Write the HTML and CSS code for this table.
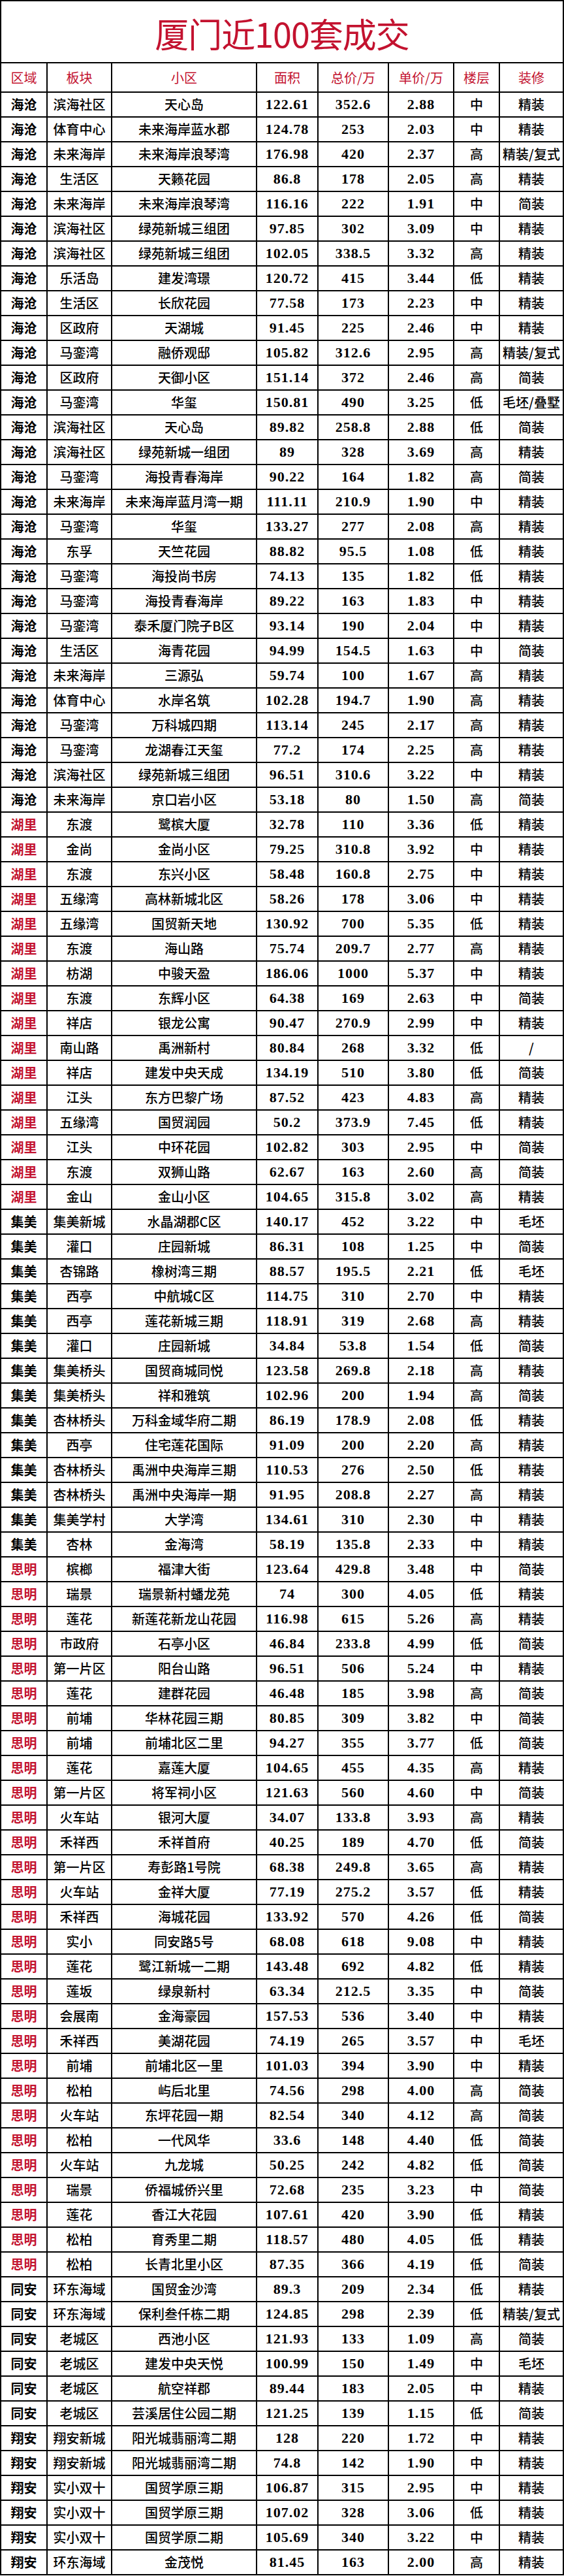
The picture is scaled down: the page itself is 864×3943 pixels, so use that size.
FILE: index.html
```html
<!DOCTYPE html>
<html lang="zh-CN">
<head>
<meta charset="utf-8">
<title>厦门近100套成交</title>
<link rel="stylesheet" href="styles.css">
</head>
<body>
<div class="sheet">
  <div class="title">厦门近100套成交</div>
  <div class="row head"><span>区域</span><span>板块</span><span>小区</span><span>面积</span><span>总价/万</span><span>单价/万</span><span>楼层</span><span>装修</span></div>
  <div class="row"><span>海沧</span><span>滨海社区</span><span>天心岛</span><span>122.61</span><span>352.6</span><span>2.88</span><span>中</span><span>精装</span></div>
  <div class="row"><span>海沧</span><span>体育中心</span><span>未来海岸蓝水郡</span><span>124.78</span><span>253</span><span>2.03</span><span>中</span><span>精装</span></div>
  <div class="row"><span>海沧</span><span>未来海岸</span><span>未来海岸浪琴湾</span><span>176.98</span><span>420</span><span>2.37</span><span>高</span><span>精装/复式</span></div>
  <div class="row"><span>海沧</span><span>生活区</span><span>天籁花园</span><span>86.8</span><span>178</span><span>2.05</span><span>高</span><span>精装</span></div>
  <div class="row"><span>海沧</span><span>未来海岸</span><span>未来海岸浪琴湾</span><span>116.16</span><span>222</span><span>1.91</span><span>中</span><span>简装</span></div>
  <div class="row"><span>海沧</span><span>滨海社区</span><span>绿苑新城三组团</span><span>97.85</span><span>302</span><span>3.09</span><span>中</span><span>精装</span></div>
  <div class="row"><span>海沧</span><span>滨海社区</span><span>绿苑新城三组团</span><span>102.05</span><span>338.5</span><span>3.32</span><span>高</span><span>精装</span></div>
  <div class="row"><span>海沧</span><span>乐活岛</span><span>建发湾璟</span><span>120.72</span><span>415</span><span>3.44</span><span>低</span><span>精装</span></div>
  <div class="row"><span>海沧</span><span>生活区</span><span>长欣花园</span><span>77.58</span><span>173</span><span>2.23</span><span>中</span><span>精装</span></div>
  <div class="row"><span>海沧</span><span>区政府</span><span>天湖城</span><span>91.45</span><span>225</span><span>2.46</span><span>中</span><span>精装</span></div>
  <div class="row"><span>海沧</span><span>马銮湾</span><span>融侨观邸</span><span>105.82</span><span>312.6</span><span>2.95</span><span>高</span><span>精装/复式</span></div>
  <div class="row"><span>海沧</span><span>区政府</span><span>天御小区</span><span>151.14</span><span>372</span><span>2.46</span><span>高</span><span>简装</span></div>
  <div class="row"><span>海沧</span><span>马銮湾</span><span>华玺</span><span>150.81</span><span>490</span><span>3.25</span><span>低</span><span>毛坯/叠墅</span></div>
  <div class="row"><span>海沧</span><span>滨海社区</span><span>天心岛</span><span>89.82</span><span>258.8</span><span>2.88</span><span>低</span><span>简装</span></div>
  <div class="row"><span>海沧</span><span>滨海社区</span><span>绿苑新城一组团</span><span>89</span><span>328</span><span>3.69</span><span>高</span><span>精装</span></div>
  <div class="row"><span>海沧</span><span>马銮湾</span><span>海投青春海岸</span><span>90.22</span><span>164</span><span>1.82</span><span>高</span><span>简装</span></div>
  <div class="row"><span>海沧</span><span>未来海岸</span><span>未来海岸蓝月湾一期</span><span>111.11</span><span>210.9</span><span>1.90</span><span>中</span><span>精装</span></div>
  <div class="row"><span>海沧</span><span>马銮湾</span><span>华玺</span><span>133.27</span><span>277</span><span>2.08</span><span>高</span><span>精装</span></div>
  <div class="row"><span>海沧</span><span>东孚</span><span>天竺花园</span><span>88.82</span><span>95.5</span><span>1.08</span><span>低</span><span>精装</span></div>
  <div class="row"><span>海沧</span><span>马銮湾</span><span>海投尚书房</span><span>74.13</span><span>135</span><span>1.82</span><span>低</span><span>精装</span></div>
  <div class="row"><span>海沧</span><span>马銮湾</span><span>海投青春海岸</span><span>89.22</span><span>163</span><span>1.83</span><span>中</span><span>精装</span></div>
  <div class="row"><span>海沧</span><span>马銮湾</span><span>泰禾厦门院子B区</span><span>93.14</span><span>190</span><span>2.04</span><span>中</span><span>精装</span></div>
  <div class="row"><span>海沧</span><span>生活区</span><span>海青花园</span><span>94.99</span><span>154.5</span><span>1.63</span><span>中</span><span>简装</span></div>
  <div class="row"><span>海沧</span><span>未来海岸</span><span>三源弘</span><span>59.74</span><span>100</span><span>1.67</span><span>高</span><span>精装</span></div>
  <div class="row"><span>海沧</span><span>体育中心</span><span>水岸名筑</span><span>102.28</span><span>194.7</span><span>1.90</span><span>高</span><span>精装</span></div>
  <div class="row"><span>海沧</span><span>马銮湾</span><span>万科城四期</span><span>113.14</span><span>245</span><span>2.17</span><span>高</span><span>精装</span></div>
  <div class="row"><span>海沧</span><span>马銮湾</span><span>龙湖春江天玺</span><span>77.2</span><span>174</span><span>2.25</span><span>高</span><span>精装</span></div>
  <div class="row"><span>海沧</span><span>滨海社区</span><span>绿苑新城三组团</span><span>96.51</span><span>310.6</span><span>3.22</span><span>中</span><span>精装</span></div>
  <div class="row"><span>海沧</span><span>未来海岸</span><span>京口岩小区</span><span>53.18</span><span>80</span><span>1.50</span><span>高</span><span>简装</span></div>
  <div class="row hl"><span>湖里</span><span>东渡</span><span>鹭槟大厦</span><span>32.78</span><span>110</span><span>3.36</span><span>低</span><span>精装</span></div>
  <div class="row hl"><span>湖里</span><span>金尚</span><span>金尚小区</span><span>79.25</span><span>310.8</span><span>3.92</span><span>中</span><span>精装</span></div>
  <div class="row hl"><span>湖里</span><span>东渡</span><span>东兴小区</span><span>58.48</span><span>160.8</span><span>2.75</span><span>中</span><span>精装</span></div>
  <div class="row hl"><span>湖里</span><span>五缘湾</span><span>高林新城北区</span><span>58.26</span><span>178</span><span>3.06</span><span>中</span><span>精装</span></div>
  <div class="row hl"><span>湖里</span><span>五缘湾</span><span>国贸新天地</span><span>130.92</span><span>700</span><span>5.35</span><span>低</span><span>精装</span></div>
  <div class="row hl"><span>湖里</span><span>东渡</span><span>海山路</span><span>75.74</span><span>209.7</span><span>2.77</span><span>高</span><span>精装</span></div>
  <div class="row hl"><span>湖里</span><span>枋湖</span><span>中骏天盈</span><span>186.06</span><span>1000</span><span>5.37</span><span>中</span><span>精装</span></div>
  <div class="row hl"><span>湖里</span><span>东渡</span><span>东辉小区</span><span>64.38</span><span>169</span><span>2.63</span><span>中</span><span>简装</span></div>
  <div class="row hl"><span>湖里</span><span>祥店</span><span>银龙公寓</span><span>90.47</span><span>270.9</span><span>2.99</span><span>中</span><span>精装</span></div>
  <div class="row hl"><span>湖里</span><span>南山路</span><span>禹洲新村</span><span>80.84</span><span>268</span><span>3.32</span><span>低</span><span>/</span></div>
  <div class="row hl"><span>湖里</span><span>祥店</span><span>建发中央天成</span><span>134.19</span><span>510</span><span>3.80</span><span>低</span><span>简装</span></div>
  <div class="row hl"><span>湖里</span><span>江头</span><span>东方巴黎广场</span><span>87.52</span><span>423</span><span>4.83</span><span>高</span><span>精装</span></div>
  <div class="row hl"><span>湖里</span><span>五缘湾</span><span>国贸润园</span><span>50.2</span><span>373.9</span><span>7.45</span><span>低</span><span>精装</span></div>
  <div class="row hl"><span>湖里</span><span>江头</span><span>中环花园</span><span>102.82</span><span>303</span><span>2.95</span><span>中</span><span>简装</span></div>
  <div class="row hl"><span>湖里</span><span>东渡</span><span>双狮山路</span><span>62.67</span><span>163</span><span>2.60</span><span>高</span><span>简装</span></div>
  <div class="row hl"><span>湖里</span><span>金山</span><span>金山小区</span><span>104.65</span><span>315.8</span><span>3.02</span><span>高</span><span>精装</span></div>
  <div class="row"><span>集美</span><span>集美新城</span><span>水晶湖郡C区</span><span>140.17</span><span>452</span><span>3.22</span><span>中</span><span>毛坯</span></div>
  <div class="row"><span>集美</span><span>灌口</span><span>庄园新城</span><span>86.31</span><span>108</span><span>1.25</span><span>中</span><span>简装</span></div>
  <div class="row"><span>集美</span><span>杏锦路</span><span>橡树湾三期</span><span>88.57</span><span>195.5</span><span>2.21</span><span>低</span><span>毛坯</span></div>
  <div class="row"><span>集美</span><span>西亭</span><span>中航城C区</span><span>114.75</span><span>310</span><span>2.70</span><span>中</span><span>精装</span></div>
  <div class="row"><span>集美</span><span>西亭</span><span>莲花新城三期</span><span>118.91</span><span>319</span><span>2.68</span><span>高</span><span>精装</span></div>
  <div class="row"><span>集美</span><span>灌口</span><span>庄园新城</span><span>34.84</span><span>53.8</span><span>1.54</span><span>低</span><span>简装</span></div>
  <div class="row"><span>集美</span><span>集美桥头</span><span>国贸商城同悦</span><span>123.58</span><span>269.8</span><span>2.18</span><span>高</span><span>精装</span></div>
  <div class="row"><span>集美</span><span>集美桥头</span><span>祥和雅筑</span><span>102.96</span><span>200</span><span>1.94</span><span>高</span><span>简装</span></div>
  <div class="row"><span>集美</span><span>杏林桥头</span><span>万科金域华府二期</span><span>86.19</span><span>178.9</span><span>2.08</span><span>低</span><span>精装</span></div>
  <div class="row"><span>集美</span><span>西亭</span><span>住宅莲花国际</span><span>91.09</span><span>200</span><span>2.20</span><span>高</span><span>精装</span></div>
  <div class="row"><span>集美</span><span>杏林桥头</span><span>禹洲中央海岸三期</span><span>110.53</span><span>276</span><span>2.50</span><span>低</span><span>精装</span></div>
  <div class="row"><span>集美</span><span>杏林桥头</span><span>禹洲中央海岸一期</span><span>91.95</span><span>208.8</span><span>2.27</span><span>高</span><span>精装</span></div>
  <div class="row"><span>集美</span><span>集美学村</span><span>大学湾</span><span>134.61</span><span>310</span><span>2.30</span><span>中</span><span>精装</span></div>
  <div class="row"><span>集美</span><span>杏林</span><span>金海湾</span><span>58.19</span><span>135.8</span><span>2.33</span><span>中</span><span>精装</span></div>
  <div class="row hl"><span>思明</span><span>槟榔</span><span>福津大街</span><span>123.64</span><span>429.8</span><span>3.48</span><span>中</span><span>简装</span></div>
  <div class="row hl"><span>思明</span><span>瑞景</span><span>瑞景新村蟠龙苑</span><span>74</span><span>300</span><span>4.05</span><span>低</span><span>精装</span></div>
  <div class="row hl"><span>思明</span><span>莲花</span><span>新莲花新龙山花园</span><span>116.98</span><span>615</span><span>5.26</span><span>高</span><span>精装</span></div>
  <div class="row hl"><span>思明</span><span>市政府</span><span>石亭小区</span><span>46.84</span><span>233.8</span><span>4.99</span><span>低</span><span>简装</span></div>
  <div class="row hl"><span>思明</span><span>第一片区</span><span>阳台山路</span><span>96.51</span><span>506</span><span>5.24</span><span>中</span><span>精装</span></div>
  <div class="row hl"><span>思明</span><span>莲花</span><span>建群花园</span><span>46.48</span><span>185</span><span>3.98</span><span>高</span><span>简装</span></div>
  <div class="row hl"><span>思明</span><span>前埔</span><span>华林花园三期</span><span>80.85</span><span>309</span><span>3.82</span><span>中</span><span>简装</span></div>
  <div class="row hl"><span>思明</span><span>前埔</span><span>前埔北区二里</span><span>94.27</span><span>355</span><span>3.77</span><span>低</span><span>简装</span></div>
  <div class="row hl"><span>思明</span><span>莲花</span><span>嘉莲大厦</span><span>104.65</span><span>455</span><span>4.35</span><span>高</span><span>精装</span></div>
  <div class="row hl"><span>思明</span><span>第一片区</span><span>将军祠小区</span><span>121.63</span><span>560</span><span>4.60</span><span>中</span><span>简装</span></div>
  <div class="row hl"><span>思明</span><span>火车站</span><span>银河大厦</span><span>34.07</span><span>133.8</span><span>3.93</span><span>高</span><span>精装</span></div>
  <div class="row hl"><span>思明</span><span>禾祥西</span><span>禾祥首府</span><span>40.25</span><span>189</span><span>4.70</span><span>低</span><span>简装</span></div>
  <div class="row hl"><span>思明</span><span>第一片区</span><span>寿彭路1号院</span><span>68.38</span><span>249.8</span><span>3.65</span><span>高</span><span>精装</span></div>
  <div class="row hl"><span>思明</span><span>火车站</span><span>金祥大厦</span><span>77.19</span><span>275.2</span><span>3.57</span><span>低</span><span>精装</span></div>
  <div class="row hl"><span>思明</span><span>禾祥西</span><span>海城花园</span><span>133.92</span><span>570</span><span>4.26</span><span>低</span><span>简装</span></div>
  <div class="row hl"><span>思明</span><span>实小</span><span>同安路5号</span><span>68.08</span><span>618</span><span>9.08</span><span>中</span><span>精装</span></div>
  <div class="row hl"><span>思明</span><span>莲花</span><span>鹭江新城一二期</span><span>143.48</span><span>692</span><span>4.82</span><span>低</span><span>精装</span></div>
  <div class="row hl"><span>思明</span><span>莲坂</span><span>绿泉新村</span><span>63.34</span><span>212.5</span><span>3.35</span><span>中</span><span>简装</span></div>
  <div class="row hl"><span>思明</span><span>会展南</span><span>金海豪园</span><span>157.53</span><span>536</span><span>3.40</span><span>中</span><span>精装</span></div>
  <div class="row hl"><span>思明</span><span>禾祥西</span><span>美湖花园</span><span>74.19</span><span>265</span><span>3.57</span><span>中</span><span>毛坯</span></div>
  <div class="row hl"><span>思明</span><span>前埔</span><span>前埔北区一里</span><span>101.03</span><span>394</span><span>3.90</span><span>中</span><span>精装</span></div>
  <div class="row hl"><span>思明</span><span>松柏</span><span>屿后北里</span><span>74.56</span><span>298</span><span>4.00</span><span>高</span><span>简装</span></div>
  <div class="row hl"><span>思明</span><span>火车站</span><span>东坪花园一期</span><span>82.54</span><span>340</span><span>4.12</span><span>高</span><span>简装</span></div>
  <div class="row hl"><span>思明</span><span>松柏</span><span>一代风华</span><span>33.6</span><span>148</span><span>4.40</span><span>低</span><span>简装</span></div>
  <div class="row hl"><span>思明</span><span>火车站</span><span>九龙城</span><span>50.25</span><span>242</span><span>4.82</span><span>低</span><span>简装</span></div>
  <div class="row hl"><span>思明</span><span>瑞景</span><span>侨福城侨兴里</span><span>72.68</span><span>235</span><span>3.23</span><span>中</span><span>简装</span></div>
  <div class="row hl"><span>思明</span><span>莲花</span><span>香江大花园</span><span>107.61</span><span>420</span><span>3.90</span><span>低</span><span>精装</span></div>
  <div class="row hl"><span>思明</span><span>松柏</span><span>育秀里二期</span><span>118.57</span><span>480</span><span>4.05</span><span>低</span><span>精装</span></div>
  <div class="row hl"><span>思明</span><span>松柏</span><span>长青北里小区</span><span>87.35</span><span>366</span><span>4.19</span><span>低</span><span>简装</span></div>
  <div class="row"><span>同安</span><span>环东海域</span><span>国贸金沙湾</span><span>89.3</span><span>209</span><span>2.34</span><span>低</span><span>精装</span></div>
  <div class="row"><span>同安</span><span>环东海域</span><span>保利叁仟栋二期</span><span>124.85</span><span>298</span><span>2.39</span><span>低</span><span>精装/复式</span></div>
  <div class="row"><span>同安</span><span>老城区</span><span>西池小区</span><span>121.93</span><span>133</span><span>1.09</span><span>高</span><span>简装</span></div>
  <div class="row"><span>同安</span><span>老城区</span><span>建发中央天悦</span><span>100.99</span><span>150</span><span>1.49</span><span>中</span><span>毛坯</span></div>
  <div class="row"><span>同安</span><span>老城区</span><span>航空祥郡</span><span>89.44</span><span>183</span><span>2.05</span><span>中</span><span>精装</span></div>
  <div class="row"><span>同安</span><span>老城区</span><span>芸溪居住公园二期</span><span>121.25</span><span>139</span><span>1.15</span><span>低</span><span>简装</span></div>
  <div class="row"><span>翔安</span><span>翔安新城</span><span>阳光城翡丽湾二期</span><span>128</span><span>220</span><span>1.72</span><span>中</span><span>精装</span></div>
  <div class="row"><span>翔安</span><span>翔安新城</span><span>阳光城翡丽湾二期</span><span>74.8</span><span>142</span><span>1.90</span><span>中</span><span>精装</span></div>
  <div class="row"><span>翔安</span><span>实小双十</span><span>国贸学原三期</span><span>106.87</span><span>315</span><span>2.95</span><span>中</span><span>精装</span></div>
  <div class="row"><span>翔安</span><span>实小双十</span><span>国贸学原三期</span><span>107.02</span><span>328</span><span>3.06</span><span>低</span><span>精装</span></div>
  <div class="row"><span>翔安</span><span>实小双十</span><span>国贸学原二期</span><span>105.69</span><span>340</span><span>3.22</span><span>中</span><span>精装</span></div>
  <div class="row"><span>翔安</span><span>环东海域</span><span>金茂悦</span><span>81.45</span><span>163</span><span>2.00</span><span>高</span><span>精装</span></div>
</div>
</body>
</html>
```

FILE: styles.css
```css
html, body {
  margin: 0;
  padding: 0;
  background: #ffffff;
}

.sheet {
  width: 864px;
  box-sizing: border-box;
  border-left: 2px solid #000;
  font-family: "Noto Sans CJK SC", "Noto Sans", sans-serif;
  color: #000;
}

.title {
  height: 97px;
  box-sizing: border-box;
  border-top: 2px solid #000;
  border-right: 2px solid #000;
  border-bottom: 2px solid #000;
  display: flex;
  align-items: center;
  justify-content: center;
  font-size: 52px;
  color: #c3122f;
  letter-spacing: -1px;
  line-height: 1;
  padding-top: 4px;
  font-family: "Noto Sans CJK SC", "Liberation Serif", sans-serif;
}

.row {
  display: grid;
  grid-template-columns: 71px 99px 222px 94px 108px 100px 70px 98px;
  height: 38px;
  box-sizing: border-box;
  border-bottom: 2px solid #000;
}

.row > span {
  display: flex;
  align-items: center;
  justify-content: center;
  border-right: 2px solid #000;
  font-size: 20px;
  font-weight: 500;
  line-height: 1;
  white-space: nowrap;
  overflow: hidden;
}

.row > span:first-child {
  font-weight: 700;
}

.row > span:nth-child(n+4):nth-child(-n+6) {
  font-family: "Liberation Serif", "Noto Sans CJK SC", serif;
  font-size: 22px;
  font-weight: 700;
  letter-spacing: 1px;
}

.row > span:last-child {
  font-size: 20px;
}

.head {
  height: 45px;
}

.head > span,
.head > span:first-child,
.head > span:nth-child(n+4):nth-child(-n+6) {
  color: #c3122f;
  font-family: "Noto Sans CJK SC", sans-serif;
  font-size: 20px;
  font-weight: 400;
  letter-spacing: 0;
}

.hl > span:first-child {
  color: #c3122f;
}
```
